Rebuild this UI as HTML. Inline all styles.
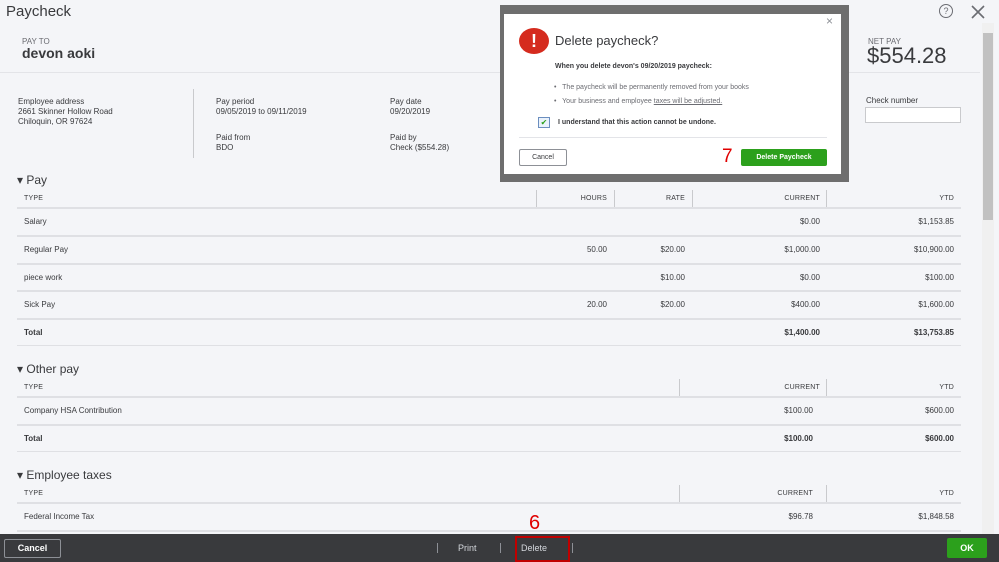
<!DOCTYPE html>
<html><head><meta charset="utf-8"><style>
*{margin:0;padding:0;box-sizing:border-box}
body{width:999px;height:562px;overflow:hidden;background:#f4f5f8;font-family:"Liberation Sans",sans-serif;color:#393a3d;position:relative}
.a{position:absolute;white-space:nowrap}
.s{font-size:8px;color:#393a3d}
.h{font-size:7px;color:#393a3d;letter-spacing:.2px}
.l{position:absolute;height:2px;background:#dfe0e4}
.v{position:absolute;width:1px;background:#c9cacd}
.r{text-align:right}
.b{font-weight:bold}
.sec{font-size:12px;color:#393a3d}
</style></head><body>
<div class="a" style="left:6px;top:3px;font-size:15px;color:#393a3d">Paycheck</div>
<div class="a" style="left:22px;top:37px;font-size:8px;color:#6b6c72">PAY TO</div>
<div class="a" style="left:22px;top:45px;font-size:14px;font-weight:bold;color:#393a3d">devon aoki</div>
<div class="a" style="left:868px;top:37px;font-size:8px;color:#6b6c72">NET PAY</div>
<div class="a" style="left:867px;top:43px;font-size:22px;color:#393a3d">$554.28</div>
<div style="position:absolute;left:0;top:72px;width:980px;height:1px;background:#e3e4e8"></div>
<div class="a" style="left:939px;top:4px;width:14px;height:14px;border:1.3px solid #6b6c72;border-radius:50%;font-size:9px;text-align:center;line-height:12px;color:#6b6c72">?</div>
<svg class="a" style="left:970px;top:4px" width="16" height="16"><path d="M2 2L14 14M14 2L2 14" stroke="#6b6c72" stroke-width="1.6"/></svg>

<div class="a s" style="left:18px;top:97px;line-height:10px">Employee address<br>2661 Skinner Hollow Road<br>Chiloquin, OR 97624</div>
<div class="v" style="left:193px;top:89px;height:69px"></div>
<div class="a s" style="left:216px;top:97px;line-height:10px">Pay period<br>09/05/2019 to 09/11/2019</div>
<div class="a s" style="left:216px;top:133px;line-height:10px">Paid from<br>BDO</div>
<div class="a s" style="left:390px;top:97px;line-height:10px">Pay date<br>09/20/2019</div>
<div class="a s" style="left:390px;top:133px;line-height:10px">Paid by<br>Check ($554.28)</div>
<div class="a s" style="left:866px;top:96px">Check number</div>
<div class="a" style="left:865px;top:107px;width:96px;height:16px;background:#fff;border:1px solid #c9cacd"></div>

<div class="a sec" style="left:17px;top:173px">▾ Pay</div>
<div class="a h" style="left:24px;top:195px">TYPE</div>
<div class="v" style="left:536px;top:190px;height:17px"></div><div class="v" style="left:614px;top:190px;height:17px"></div><div class="v" style="left:692px;top:190px;height:17px"></div><div class="v" style="left:826px;top:190px;height:17px"></div>
<div class="a h r" style="left:560px;width:47px;top:195px">HOURS</div>
<div class="a h r" style="left:640px;width:45px;top:195px">RATE</div>
<div class="a h r" style="left:720px;width:100px;top:195px">CURRENT</div>
<div class="a h r" style="left:850px;width:104px;top:195px">YTD</div>
<div class="l" style="left:17px;top:207px;width:944px"></div>
<div class="a s" style="left:24px;top:217px">Salary</div><div class="a s r" style="left:720px;width:100px;top:217px">$0.00</div><div class="a s r" style="left:850px;width:104px;top:217px">$1,153.85</div>
<div class="l" style="left:17px;top:235px;width:944px"></div>
<div class="a s" style="left:24px;top:245px">Regular Pay</div><div class="a s r" style="left:560px;width:47px;top:245px">50.00</div><div class="a s r" style="left:640px;width:45px;top:245px">$20.00</div><div class="a s r" style="left:720px;width:100px;top:245px">$1,000.00</div><div class="a s r" style="left:850px;width:104px;top:245px">$10,900.00</div>
<div class="l" style="left:17px;top:263px;width:944px"></div>
<div class="a s" style="left:24px;top:273px">piece work</div><div class="a s r" style="left:640px;width:45px;top:273px">$10.00</div><div class="a s r" style="left:720px;width:100px;top:273px">$0.00</div><div class="a s r" style="left:850px;width:104px;top:273px">$100.00</div>
<div class="l" style="left:17px;top:290px;width:944px"></div>
<div class="a s" style="left:24px;top:300px">Sick Pay</div><div class="a s r" style="left:560px;width:47px;top:300px">20.00</div><div class="a s r" style="left:640px;width:45px;top:300px">$20.00</div><div class="a s r" style="left:720px;width:100px;top:300px">$400.00</div><div class="a s r" style="left:850px;width:104px;top:300px">$1,600.00</div>
<div class="l" style="left:17px;top:318px;width:944px"></div>
<div class="a s b" style="left:24px;top:328px">Total</div><div class="a s b r" style="left:720px;width:100px;top:328px">$1,400.00</div><div class="a s b r" style="left:850px;width:104px;top:328px">$13,753.85</div>
<div class="l" style="left:17px;top:345px;width:944px;height:1px"></div>

<div class="a sec" style="left:17px;top:362px">▾ Other pay</div>
<div class="a h" style="left:24px;top:384px">TYPE</div>
<div class="v" style="left:679px;top:379px;height:17px"></div><div class="v" style="left:826px;top:379px;height:17px"></div>
<div class="a h r" style="left:720px;width:100px;top:384px">CURRENT</div>
<div class="a h r" style="left:850px;width:104px;top:384px">YTD</div>
<div class="l" style="left:17px;top:396px;width:944px"></div>
<div class="a s" style="left:24px;top:406px">Company HSA Contribution</div><div class="a s r" style="left:720px;width:93px;top:406px">$100.00</div><div class="a s r" style="left:850px;width:104px;top:406px">$600.00</div>
<div class="l" style="left:17px;top:424px;width:944px"></div>
<div class="a s b" style="left:24px;top:434px">Total</div><div class="a s b r" style="left:720px;width:93px;top:434px">$100.00</div><div class="a s b r" style="left:850px;width:104px;top:434px">$600.00</div>
<div class="l" style="left:17px;top:451px;width:944px;height:1px"></div>

<div class="a sec" style="left:17px;top:468px">▾ Employee taxes</div>
<div class="a h" style="left:24px;top:490px">TYPE</div>
<div class="v" style="left:679px;top:485px;height:17px"></div><div class="v" style="left:826px;top:485px;height:17px"></div>
<div class="a h r" style="left:720px;width:93px;top:490px">CURRENT</div>
<div class="a h r" style="left:850px;width:104px;top:490px">YTD</div>
<div class="l" style="left:17px;top:502px;width:944px"></div>
<div class="a s" style="left:24px;top:512px">Federal Income Tax</div><div class="a s r" style="left:720px;width:93px;top:512px">$96.78</div><div class="a s r" style="left:850px;width:104px;top:512px">$1,848.58</div>
<div class="l" style="left:17px;top:530px;width:944px"></div>

<div class="a" style="left:982px;top:23px;width:12px;height:511px;background:#f0f0f0"></div>
<div class="a" style="left:983px;top:33px;width:10px;height:187px;background:#c1c1c1"></div>

<div class="a" style="left:0;top:534px;width:999px;height:28px;background:#393a3d"></div>
<div class="a" style="left:4px;top:539px;width:57px;height:19px;border:1px solid #8d9096;border-radius:2px;color:#fff;font-size:9px;font-weight:bold;text-align:center;line-height:17px">Cancel</div>
<div class="a" style="left:437px;top:543px;width:1px;height:10px;background:#8d9096"></div>
<div class="a" style="left:458px;top:543px;font-size:9px;color:#d4d7dc">Print</div>
<div class="a" style="left:500px;top:543px;width:1px;height:10px;background:#8d9096"></div>
<div class="a" style="left:521px;top:543px;font-size:9px;color:#d4d7dc">Delete</div>
<div class="a" style="left:572px;top:543px;width:1px;height:10px;background:#8d9096"></div>
<div class="a" style="left:515px;top:536px;width:55px;height:26px;border:2px solid #c00000"></div>
<div class="a" style="left:529px;top:512px;font-size:20px;color:#e00000">6</div>
<div class="a" style="left:947px;top:538px;width:40px;height:20px;background:#2ca01c;border-radius:2px;color:#fff;font-size:9px;font-weight:bold;text-align:center;line-height:20px">OK</div>

<div class="a" style="left:500px;top:5px;width:349px;height:177px;background:#6e6e6e"></div>
<div class="a" style="left:504px;top:14px;width:337px;height:160px;background:#fff"></div>
<div class="a" style="left:826px;top:14px;font-size:12px;color:#8d9096">×</div>
<div class="a" style="left:519px;top:28px;width:30px;height:26px;border-radius:50%;background:#d52b1e;color:#fff;font-size:18px;font-weight:bold;text-align:center;line-height:26px">!</div>
<div class="a" style="left:555px;top:33px;font-size:13px;color:#393a3d">Delete paycheck?</div>
<div class="a" style="left:555px;top:63px;font-size:7px;font-weight:bold;color:#393a3d">When you delete devon's 09/20/2019 paycheck:</div>
<div class="a" style="left:554px;top:84px;font-size:7px;color:#6b6c72">•&nbsp;&nbsp; The paycheck will be permanently removed from your books</div>
<div class="a" style="left:554px;top:98px;font-size:7px;color:#6b6c72">•&nbsp;&nbsp; Your business and employee <u>taxes will be adjusted.</u></div>
<div class="a" style="left:538px;top:117px;width:12px;height:11px;border:1px solid #6b8ebf;background:#eaf2fb;color:#2ca01c;font-size:8px;text-align:center;line-height:9px">✔</div>
<div class="a" style="left:558px;top:119px;font-size:7px;font-weight:bold;color:#393a3d">I understand that this action cannot be undone.</div>
<div class="a" style="left:519px;top:137px;width:308px;height:1px;background:#e3e4e8"></div>
<div class="a" style="left:519px;top:149px;width:48px;height:17px;border:1px solid #8d9096;border-radius:2px;font-size:7px;text-align:center;line-height:15px;color:#393a3d">Cancel</div>
<div class="a" style="left:722px;top:146px;font-size:19px;color:#e00000">7</div>
<div class="a" style="left:741px;top:149px;width:86px;height:17px;background:#2ca01c;border-radius:2px;font-size:7px;font-weight:bold;text-align:center;line-height:17px;color:#fff">Delete Paycheck</div>
</body></html>
